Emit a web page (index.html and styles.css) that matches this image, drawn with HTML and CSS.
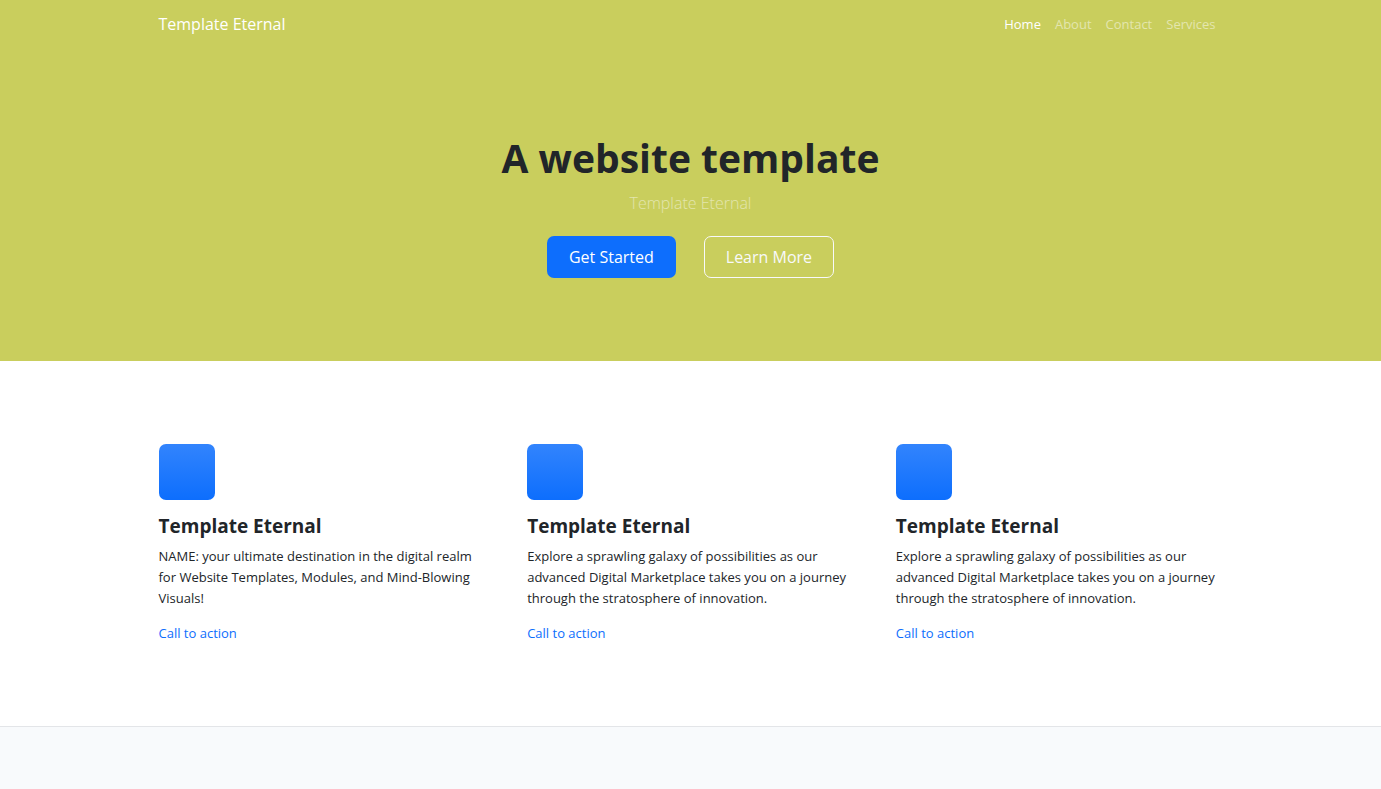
FILE: index.html
```
<!DOCTYPE html>
<html lang="en">

<head>
  <meta charset="utf-8">
  <meta name="viewport" content="width=device-width, initial-scale=1">
  <title>Template Eternal</title>
  <link rel="stylesheet" href="styles.css">
</head>

<body>

  <nav class="navbar">
    <div class="container navbar-inner">
      <a class="brand" href="#">Template Eternal</a>
      <div class="nav-links">
        <a class="nav-link active" href="#">Home</a>
        <a class="nav-link" href="#">About</a>
        <a class="nav-link" href="#">Contact</a>
        <a class="nav-link" href="#">Services</a>
      </div>
    </div>
  </nav>

  <header class="hero">
    <h1>A website template</h1>
    <p class="lead">Template Eternal</p>
    <div class="hero-buttons">
      <a class="btn btn-primary" href="#features">Get Started</a>
      <a class="btn btn-outline" href="#">Learn More</a>
    </div>
  </header>

  <section class="features" id="features">
    <div class="container feature-grid">
      <div class="feature">
        <div class="feature-icon"></div>
        <h2>Template Eternal</h2>
        <p>NAME: your ultimate destination in the digital realm for Website Templates, Modules, and Mind-Blowing Visuals!</p>
        <a class="feature-link" href="#">Call to action</a>
      </div>
      <div class="feature">
        <div class="feature-icon"></div>
        <h2>Template Eternal</h2>
        <p>Explore a sprawling galaxy of possibilities as our advanced Digital Marketplace takes you on a journey through the stratosphere of innovation.</p>
        <a class="feature-link" href="#">Call to action</a>
      </div>
      <div class="feature">
        <div class="feature-icon"></div>
        <h2>Template Eternal</h2>
        <p>Explore a sprawling galaxy of possibilities as our advanced Digital Marketplace takes you on a journey through the stratosphere of innovation.</p>
        <a class="feature-link" href="#">Call to action</a>
      </div>
    </div>
  </section>

</body>

</html>
```
FILE: styles.css
```
* {
  box-sizing: border-box;
}

body {
  margin: 0;
  background-color: #f8fafc;
  color: #212529;
  font-family: "Segoe UI", "Open Sans", "Noto Sans", sans-serif;
  font-size: 13px;
  line-height: 21px;
}

h1,
h2,
p {
  margin: 0;
}

a {
  text-decoration: none;
}

.container {
  max-width: 1106px;
  margin: 0 auto;
  padding: 0 21px;
}

.navbar {
  background-color: #c9ce5d;
  padding: 7px 0;
}

.navbar-inner {
  display: flex;
  align-items: center;
  justify-content: space-between;
}

.brand {
  color: white;
  font-size: 16px;
  line-height: 35px;
}

.nav-links {
  display: flex;
  gap: 14px;
  padding-right: 7px;
}

.nav-link {
  color: rgba(255, 255, 255, 0.5);
}

.nav-link:hover,
.nav-link.active {
  color: white;
}

.hero {
  background-color: #c9ce5d;
  padding: 84px 21px 83px;
  text-align: center;
}

.hero h1 {
  font-size: 39px;
  line-height: 50px;
  margin-bottom: 7px;
}

.lead {
  color: rgba(255, 255, 255, 0.5);
  font-size: 16px;
  font-weight: 300;
  line-height: 26px;
  margin-bottom: 20px;
}

.hero-buttons {
  display: flex;
  flex-wrap: wrap;
  justify-content: center;
  gap: 28px;
}

.btn {
  border: 1px solid transparent;
  border-radius: 7px;
  padding: 7px 21px;
  font-size: 16px;
  line-height: 26px;
}

.btn-primary {
  background-color: #0d6efd;
  color: white;
}

.btn-outline {
  border-color: #f8f9fa;
  color: #f8f9fa;
}

.features {
  background-color: white;
  border-bottom: 1px solid #e3e5e8;
  padding: 83px 0 82px;
}

.feature-grid {
  display: grid;
  grid-template-columns: repeat(auto-fit, minmax(280px, 1fr));
  gap: 42px;
}

.feature-icon {
  width: 56px;
  height: 56px;
  border-radius: 7px;
  background: linear-gradient(#3284fd, #0d6efd);
  margin-bottom: 14px;
}

.feature h2 {
  font-size: 19px;
  line-height: 25px;
  margin-bottom: 7px;
}

.feature p {
  margin-bottom: 14px;
}

.feature-link {
  color: #0d6efd;
}
```
